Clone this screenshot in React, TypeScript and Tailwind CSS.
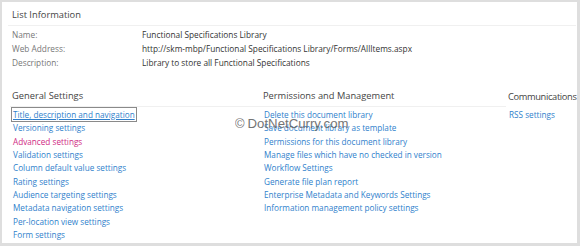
import React from 'react';

const general = [
  'Title, description and navigation',
  'Versioning settings',
  'Advanced settings',
  'Validation settings',
  'Column default value settings',
  'Rating settings',
  'Audience targeting settings',
  'Metadata navigation settings',
  'Per-location view settings',
  'Form settings',
];

const permissions = [
  'Delete this document library',
  'Save document library as template',
  'Permissions for this document library',
  'Manage files which have no checked in version',
  'Workflow Settings',
  'Generate file plan report',
  'Enterprise Metadata and Keywords Settings',
  'Information management policy settings',
];

const info = [
  ['Name:', 'Functional Specifications Library'],
  ['Web Address:', 'http://skm-mbp/Functional Specifications Library/Forms/AllItems.aspx'],
  ['Description:', 'Library to store all Functional Specifications'],
];

function LinkList({ items, focusFirst = false }: { items: string[]; focusFirst?: boolean }) {
  return (
    <ul className="mt-[1px] text-[8.2px] leading-[13.33px] text-[#2f7fcc]">
      {items.map((t, i) => (
        <li key={t}>
          <span
            className={
              focusFirst && i === 0
                ? 'underline outline outline-1 outline-[#8a8a8a] outline-offset-[1px]'
                : t === 'Advanced settings'
                ? 'text-[#d02a84]'
                : ''
            }
          >
            {t}
          </span>
        </li>
      ))}
    </ul>
  );
}

function Header({ title, className = '' }: { title: string; className?: string }) {
  return (
    <div className={'h-[24px] flex items-end pb-[3px] border-b border-[#f0f0f0] text-[9.3px] text-[#444] ' + className}>
      {title}
    </div>
  );
}

export default function App() {
  return (
    <div
      className="w-[580px] h-[246px] bg-[#dedede] pt-[2px] pl-[2px] pr-[3px] pb-[3px]"
      style={{ fontFamily: '"Open Sans", "Noto Sans", sans-serif' }}
    >
      <div className="relative h-full bg-white">
        <div className="pl-[6px]">
          <Header title="List Information" className="pl-[4px] mr-[1px]" />
          <div className="pl-[4px] pt-[2px] text-[8.3px] leading-[14px]">
            {info.map(([k, v]) => (
              <div key={k} className="flex">
                <span className="w-[130px] text-[#777]">{k}</span>
                <span className="text-[#333]">{v}</span>
              </div>
            ))}
          </div>
        </div>

        <div className="mt-[13px] pl-[8px] flex">
          <div className="w-[250px] shrink-0">
            <Header title="General Settings" className="pl-[2px]" />
            <div className="pl-[3px]">
              <LinkList items={general} focusFirst />
            </div>
          </div>
          <div className="w-[246px] shrink-0">
            <Header title="Permissions and Management" className="pl-[3px]" />
            <div className="pl-[4px]">
              <LinkList items={permissions} />
            </div>
          </div>
          <div className="flex-1 min-w-0">
            <Header title="Communications" className="pl-[2px] border-b-0 whitespace-nowrap tracking-[-0.35px]" />
            <div className="pl-[3px]">
              <LinkList items={['RSS settings']} />
            </div>
          </div>
        </div>

        <div
          className="absolute left-[233px] top-[112px] flex items-center gap-[3px] text-[13.2px] text-[#666] opacity-90"
          style={{ fontFamily: '"Liberation Sans", Arial, sans-serif' }}
        >
          <span className="text-[13px]">©</span>
          <span>DotNetCurry.com</span>
        </div>
      </div>
    </div>
  );
}
